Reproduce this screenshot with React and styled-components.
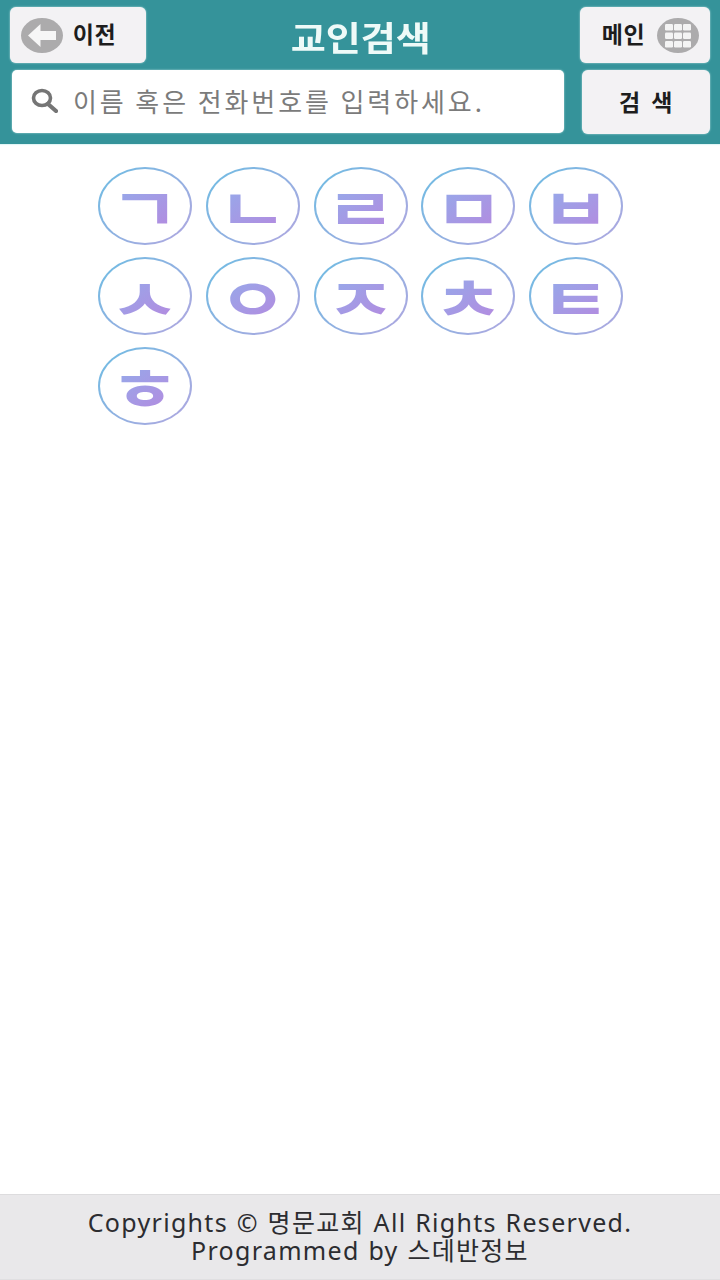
import React from "react";
import styled, { createGlobalStyle } from "styled-components";

const Global = createGlobalStyle`
  html, body { margin: 0; padding: 0; background: #fff; }
  #root { width: 720px; height: 1280px; }
  * { box-sizing: border-box; }
`;
const FONT = `"Noto Sans CJK KR", "Noto Sans", sans-serif`;
const FOOT_FONT = `"Noto Sans", "Noto Sans CJK KR", sans-serif`;

const Page = styled.div`
  width: 720px; height: 1280px; display: flex; flex-direction: column;
  font-family: ${FONT}; background: #fff;
`;
const Header = styled.header`
  height: 144px; background: #35939a; padding: 7px 10px 0;
  display: flex; flex-direction: column; gap: 7px;
  box-shadow: 0 1px 1px #e3f6f6;
`;
const TopRow = styled.div`
  display: flex; align-items: stretch; height: 56px;
`;
const Title = styled.h1`
  flex: 1; margin: 0; padding-right: 4px; color: #eefaf8; font-size: 34px; font-weight: 700;
  text-align: center; line-height: 60px; letter-spacing: 0;
  transform: scaleX(1.12);
  white-space: nowrap;
`;
const NavButton = styled.button`
  width: ${p => p.$w}px; padding: 0 ${p => p.$right}px 0 ${p => p.$left}px; border: 0; border-radius: 6px;
  background: #f3f2f4; color: #1d1d1d; font-family: ${FONT}; font-size: 23px; font-weight: 700;
  display: flex; align-items: center; gap: ${p => p.$gap}px;
  box-shadow: 0 0 2px #bfe3e4;
  flex-shrink: 0;
  svg { flex-shrink: 0; }
`;
const NavLabel = styled.span`
  display: inline-block; letter-spacing: 0.5px; line-height: 1; white-space: nowrap;
  padding-bottom: 3px; width: 47px;
`;
const SearchRow = styled.div`
  display: flex; justify-content: space-between; padding: 0 0 0 2px; height: 64px;
`;
const SearchBox = styled.div`
  width: 552px; height: 63px; background: #fff; border-radius: 5px; padding: 0 0 2px 19px;
  display: flex; align-items: center; gap: 15px;
  box-shadow: 0 0 2px #bfe3e4;
`;
const Placeholder = styled.span`
  color: #7b7b7b; font-size: 26px; font-weight: 400; letter-spacing: 2.9px; line-height: 1; white-space: nowrap;
`;
const SearchButton = styled.button`
  width: 128px; height: 64px; border: 0; border-radius: 6px; background: #f3f2f4; color: #1d1d1d;
  font-family: ${FONT}; font-size: 23px; font-weight: 700; letter-spacing: 0.5px; word-spacing: 5px;
  box-shadow: 0 0 2px #bfe3e4; padding: 0 0 3px;
`;
const Main = styled.main`
  flex: 1; padding: 23px 0 0 98px;
`;
const Letters = styled.div`
  display: grid; grid-template-columns: repeat(5, 94px); grid-auto-rows: 78px; column-gap: 13.75px; row-gap: 12px;
`;
const LetterRing = styled.div`
  width: 94px; height: 78px; border-radius: 50%; padding: 2px;
  background: linear-gradient(135deg, #6cbde3, #b3a6e0);
`;
const LetterInner = styled.div`
  width: 100%; height: 100%; border-radius: 50%; background: #fff;
  display: flex; align-items: center; justify-content: center;
`;
const LetterGlyph = styled.span`
  font-size: 58px; font-weight: 700; line-height: 1; display: inline-block;
  transform: scaleX(1.32);
  background: linear-gradient(135deg, #8fb0ec, #b886de);
  -webkit-background-clip: text; background-clip: text; color: transparent;
`;
const Footer = styled.footer`
  height: 86px; background: #e9e8ea; border-top: 1px solid #dddcde; border-bottom: 1px solid #e0dfe1;
  padding-bottom: 2px;
  display: flex; flex-direction: column; align-items: center; justify-content: center;
  font-family: ${FOOT_FONT};
  color: #2c2c30; font-size: 25px; line-height: 28.5px; letter-spacing: 1.3px; word-spacing: 1px;
`;
const FooterLine = styled.div` white-space: nowrap; `;

const BackIcon = () => (
  <svg width="42" height="35" viewBox="0 0 42 35" aria-hidden="true">
    <ellipse cx="21" cy="17.5" rx="21" ry="17.5" fill="#acabac" />
    <path d="M7 17.5 L19.5 6 V13 H35 V22 H19.5 V29 Z" fill="#f6f6f6" />
  </svg>
);
const GridIcon = () => (
  <svg width="42" height="35" viewBox="0 0 42 35" aria-hidden="true">
    <ellipse cx="21" cy="17.5" rx="21" ry="17.5" fill="#acabac" />
    {[6, 14.5, 23].map(y => [8, 17, 26].map(x => (
      <rect key={`${x}-${y}`} x={x} y={y} width="8" height="6.5" rx="1.2" fill="#f4f4f4" />
    )))}
  </svg>
);
const SearchIcon = () => (
  <svg width="27" height="25" viewBox="0 0 27 25" aria-hidden="true">
    <ellipse cx="11" cy="10" rx="8.5" ry="7.5" fill="none" stroke="#757575" strokeWidth="3.6" />
    <path d="M17 16 L25 23" stroke="#757575" strokeWidth="4.2" strokeLinecap="round" />
  </svg>
);

const LETTERS = ["ㄱ", "ㄴ", "ㄹ", "ㅁ", "ㅂ", "ㅅ", "ㅇ", "ㅈ", "ㅊ", "ㅌ", "ㅎ"];

export default function App() {
  return (
    <Page>
      <Global />
      <Header>
        <TopRow>
          <NavButton $w={136} $left={11} $right={5} $gap={8}>
            <BackIcon />
            <NavLabel>이전</NavLabel>
          </NavButton>
          <Title>교인검색</Title>
          <NavButton $w={130} $left={20} $right={8} $gap={10}>
            <NavLabel>메인</NavLabel>
            <GridIcon />
          </NavButton>
        </TopRow>
        <SearchRow>
          <SearchBox>
            <SearchIcon />
            <Placeholder>이름 혹은 전화번호를 입력하세요.</Placeholder>
          </SearchBox>
          <SearchButton>검 색</SearchButton>
        </SearchRow>
      </Header>
      <Main>
        <Letters>
          {LETTERS.map(l => (
            <LetterRing key={l}>
              <LetterInner><LetterGlyph>{l}</LetterGlyph></LetterInner>
            </LetterRing>
          ))}
        </Letters>
      </Main>
      <Footer>
        <FooterLine>Copyrights © 명문교회 All Rights Reserved.</FooterLine>
        <FooterLine>Programmed by 스데반정보</FooterLine>
      </Footer>
    </Page>
  );
}
